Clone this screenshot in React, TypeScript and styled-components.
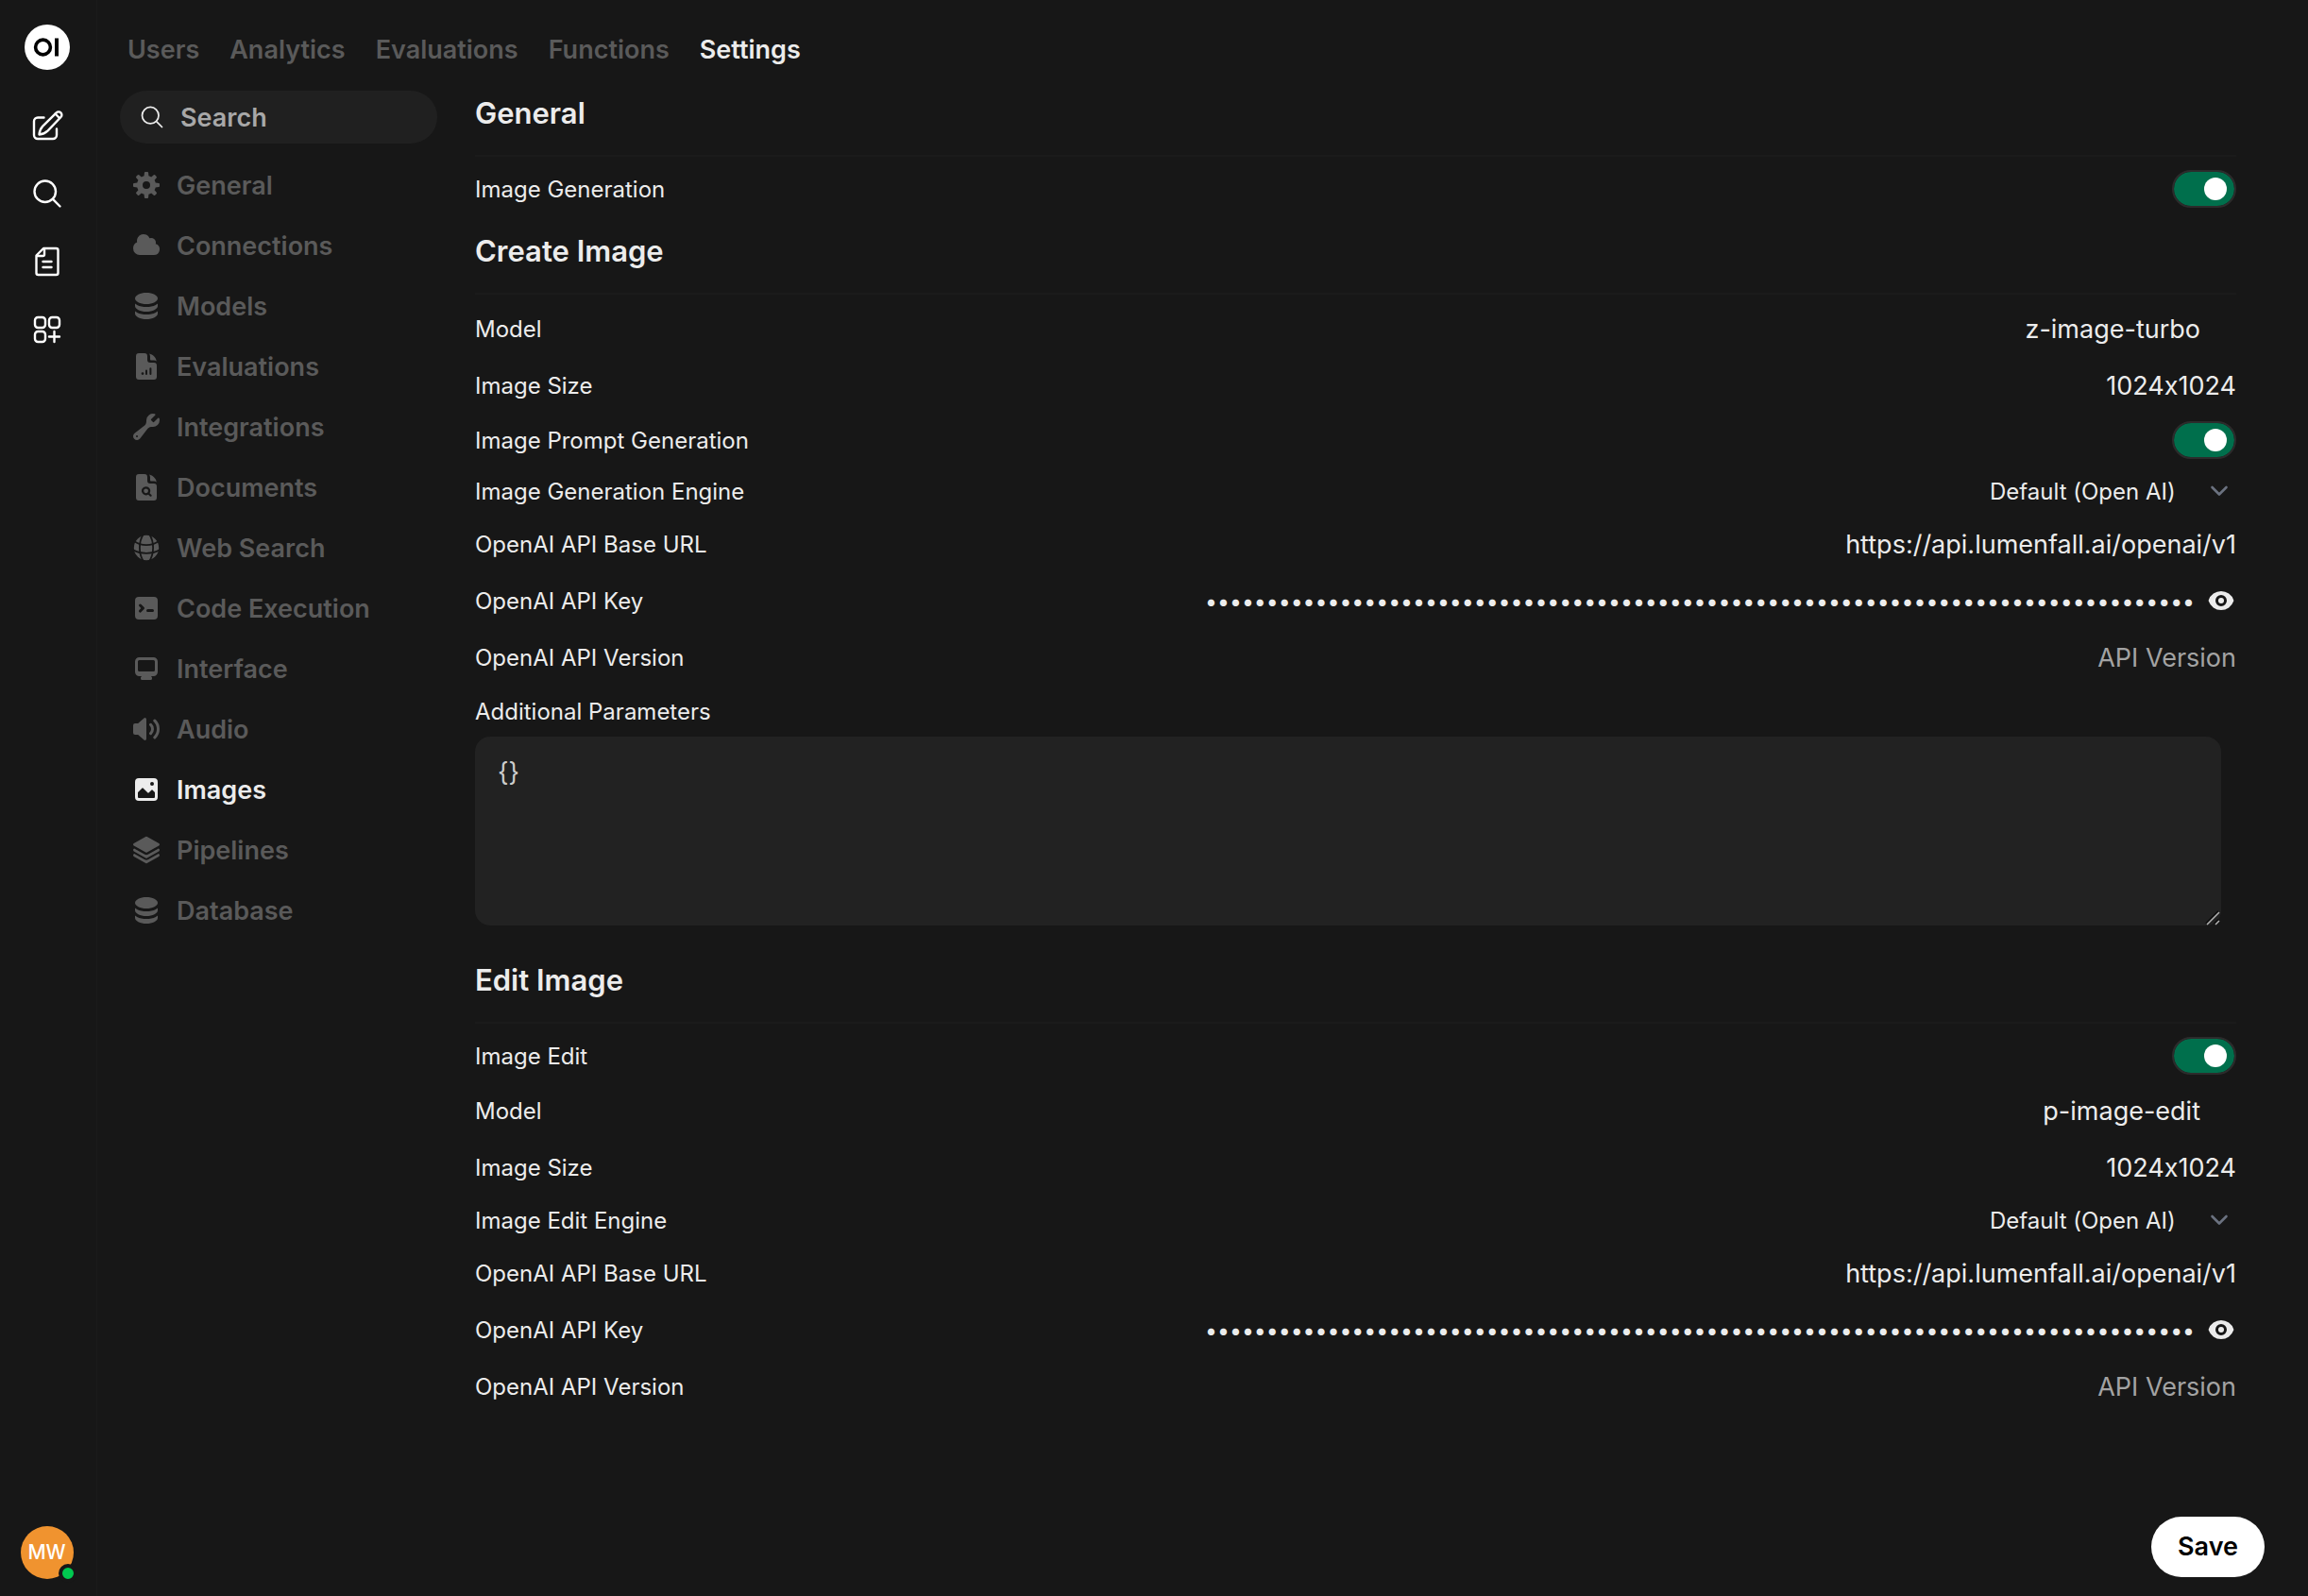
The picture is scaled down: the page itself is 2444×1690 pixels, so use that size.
import React, { useId, useState } from "react";
import styled, { createGlobalStyle } from "styled-components";

const GlobalStyle = createGlobalStyle`
  *, *::before, *::after { box-sizing: border-box; }
  body {
    margin: 0;
    background: #171717;
    color: #ececec;
    font-family: Inter, "Liberation Sans", sans-serif;
    font-size: 27px;
    line-height: 40px;
    font-feature-settings: "calt" 0;
    -webkit-font-smoothing: antialiased;
  }
  button, input, textarea, select { font: inherit; color: inherit; font-feature-settings: inherit; }
`;

const Shell = styled.div`
  display: flex;
  min-height: 100vh;
`;

const Rail = styled.aside`
  display: flex;
  flex-direction: column;
  align-items: center;
  flex: none;
  width: 103px;
  padding: 26px 3px 18px 0;
  border-right: 1px solid #1b1b1b;
`;

const Logo = styled.a`
  display: block;
  height: 48px;
  margin-bottom: 23px;
  svg { display: block; }
`;

const RailLinks = styled.nav`
  display: flex;
  flex-direction: column;
`;

const RailLink = styled.a`
  display: grid;
  place-items: center;
  width: 72px;
  height: 72px;
  color: #ffffff;
`;

const Avatar = styled.button`
  position: relative;
  width: 56px;
  height: 56px;
  margin-top: auto;
  padding: 0;
  border: 0;
  border-radius: 50%;
  background: #f0932f;
  color: #ffffff;
  font-size: 21px;
  font-weight: 500;
  line-height: 56px;
`;

const Presence = styled.span`
  position: absolute;
  right: -4px;
  bottom: -4px;
  width: 20px;
  height: 20px;
  border: 4px solid #171717;
  border-radius: 50%;
  background: #00c950;
`;

const Main = styled.div`
  display: flex;
  flex-direction: column;
  flex: 1;
  min-width: 0;
`;

const Tabs = styled.nav`
  display: flex;
  gap: 32px;
  padding: 33px 32px 23px;
`;

const Tab = styled.a<{ $active?: boolean }>`
  color: ${(p) => (p.$active ? "#ececec" : "#5a5a5a")};
  font-weight: 600;
  text-decoration: none;
`;

const Columns = styled.div`
  display: flex;
  flex: 1;
  gap: 40px;
  padding: 0 46px 20px 24px;
`;

const SideNav = styled.div`
  display: flex;
  flex-direction: column;
  flex: none;
  width: 336px;
`;

const SearchBox = styled.label`
  display: flex;
  align-items: center;
  gap: 16px;
  height: 56px;
  margin-bottom: 16px;
  padding: 0 20px;
  border-radius: 28px;
  background: #202020;
  svg { flex: none; }
`;

const SearchInput = styled.input`
  flex: 1;
  min-width: 0;
  padding: 2px 0 0;
  border: 0;
  outline: 0;
  background: none;
  font-weight: 600;
  &::placeholder { color: #a8a8a8; opacity: 1; }
`;

const NavList = styled.nav`
  display: flex;
  flex-direction: column;
  gap: 8px;
`;

const NavItem = styled.a<{ $active?: boolean }>`
  display: flex;
  align-items: center;
  gap: 16px;
  height: 56px;
  padding: 0 12px;
  color: ${(p) => (p.$active ? "#ececec" : "#5a5a5a")};
  font-weight: 600;
  text-decoration: none;
  svg { flex: none; }
`;

const NavText = styled.span`
  padding-top: 2px;
`;

const Form = styled.form`
  display: flex;
  flex-direction: column;
  flex: 1;
  min-width: 0;
`;

const Section = styled.section`
  display: flex;
  flex-direction: column;
  gap: 20px;
  margin: 0 30px 24px 0;
`;

const SectionTitle = styled.h2`
  margin: -4px 0 -4px;
  padding-bottom: 16px;
  border-bottom: 2px solid #1b1b1b;
  font-size: 31px;
  line-height: 56px;
  font-weight: 600;
`;

const Row = styled.div<{ $h?: number }>`
  display: flex;
  align-items: center;
  height: ${(p) => p.$h ?? 40}px;
`;

const Label = styled.label`
  flex: none;
  margin-right: auto;
  padding-top: 2px;
  font-size: 24px;
  line-height: 32px;
  white-space: nowrap;
`;

const TextInput = styled.input<{ $inset?: boolean }>`
  flex: 1;
  min-width: 0;
  height: 40px;
  padding: 2px ${(p) => (p.$inset ? 38 : 0)}px 0 0;
  border: 0;
  outline: 0;
  background: none;
  text-align: right;
  &::placeholder { color: #a3a3a3; opacity: 1; }
  &[type="password"] { font-size: 23px; }
`;

const EyeButton = styled.button`
  display: grid;
  place-items: center;
  width: 32px;
  height: 40px;
  margin-left: 12px;
  padding: 0;
  border: 0;
  background: none;
`;

const SelectWrap = styled.div`
  display: grid;
  align-items: center;
  > * { grid-area: 1 / 1; }
  svg { justify-self: end; margin-right: 6px; pointer-events: none; }
`;

const Select = styled.select`
  appearance: none;
  height: 34px;
  padding: 2px 64px 0 0;
  border: 0;
  outline: 0;
  background: none;
  font-size: 24px;
  line-height: 32px;
`;

const Switch = styled.input`
  appearance: none;
  display: flex;
  align-items: center;
  width: 64px;
  height: 36px;
  margin: 0 2px;
  padding: 0 8px;
  border-radius: 18px;
  outline: 2px solid #2c2c2c;
  background: #333333;
  &::before {
    content: "";
    width: 24px;
    height: 24px;
    border-radius: 50%;
    background: #ffffff;
  }
  &:checked {
    justify-content: flex-end;
    background: #006f4c;
  }
`;

const ParamsField = styled.div`
  display: flex;
  flex-direction: column;
  gap: 10px;
  margin-bottom: 10px;
  padding-right: 16px;
`;

const ParamsBox = styled.div`
  position: relative;
`;

const Params = styled.textarea`
  display: block;
  width: 100%;
  height: 200px;
  padding: 18px 24px;
  border: 0;
  border-radius: 16px;
  outline: 0;
  background: #222222;
  color: #cdcdcd;
  resize: vertical;
  &::-webkit-resizer { display: none; }
`;

const Grip = styled.svg`
  position: absolute;
  right: 0;
  bottom: 0;
  pointer-events: none;
`;

const Actions = styled.div`
  display: flex;
  justify-content: flex-end;
  margin-top: auto;
`;

const SaveButton = styled.button`
  height: 64px;
  padding: 0 28px;
  border: 0;
  border-radius: 32px;
  background: #ffffff;
  color: #000000;
  font-weight: 600;
`;

/* ---------- icons ---------- */

const Outline = ({ size = 32, width = 1.5, children }: { size?: number; width?: number; children: React.ReactNode }) => (
  <svg width={size} height={size} viewBox="0 0 24 24" fill="none" stroke="currentColor" strokeWidth={width} strokeLinecap="round" strokeLinejoin="round" aria-hidden="true">
    {children}
  </svg>
);

const Solid = ({ children }: { children: React.ReactNode }) => (
  <svg width={32} height={32} viewBox="0 0 16 16" fill="currentColor" fillRule="evenodd" clipRule="evenodd" aria-hidden="true">
    {children}
  </svg>
);

const SearchGlyph = <path d="m21 21-5.197-5.197m0 0A7.5 7.5 0 1 0 5.196 5.196a7.5 7.5 0 0 0 10.607 10.607Z" />;

const LogoMark = () => (
  <svg width="48" height="48" viewBox="0 0 48 48" aria-hidden="true">
    <circle cx="24" cy="24" r="24" fill="#fff" />
    <circle cx="19.5" cy="24" r="7.9" fill="none" stroke="#000" strokeWidth="3.6" />
    <rect x="32" y="14.5" width="4" height="19" fill="#000" />
  </svg>
);

const PencilSquare = () => (
  <svg width="36" height="36" viewBox="0 0 36 36" fill="none" stroke="currentColor" strokeWidth="2.4" strokeLinecap="round" strokeLinejoin="round" aria-hidden="true">
    <path d="M14.500 9.500H8a4 4 0 0 0-4 4V28a4 4 0 0 0 4 4h16a4 4 0 0 0 4-4v-6.500" />
    <path d="M9.500 27.500c.3-3.400 1.500-6.500 4-9.200L27.700 4.300a3.300 3.300 0 0 1 4.700 4.700L18.700 23.300c-2.700 2.600-5.800 3.900-9.200 4.200Z" />
    <path d="m26.500 5.500 4.500 4.500" />
  </svg>
);

const NoteIcon = () => (
  <svg width="36" height="36" viewBox="0 0 36 36" fill="none" stroke="currentColor" strokeWidth="2.400" strokeLinecap="round" strokeLinejoin="round" aria-hidden="true">
    <path d="M14 4h13.500A2 2 0 0 1 29.500 6v24a2 2 0 0 1-2 2h-19a2 2 0 0 1-2-2V11.500L14 4Z" />
    <path d="M15 5v5.500a1.500 1.500 0 0 1-1.500 1.500H8M13.500 18h9M13.500 24h9" />
  </svg>
);

const GridPlus = () => (
  <svg width="36" height="36" viewBox="0 0 36 36" fill="none" stroke="currentColor" strokeWidth="2.400" strokeLinecap="round" aria-hidden="true">
    <rect x="5" y="5" width="11" height="11" rx="3.200" />
    <rect x="20" y="5" width="11" height="11" rx="3.200" />
    <rect x="5" y="20" width="11" height="11" rx="3.200" />
    <path d="M25.500 20v11M20 25.500h11" />
  </svg>
);

const EyeIcon = () => (
  <svg width="32" height="32" viewBox="0 0 16 16" fill="currentColor" fillRule="evenodd" aria-hidden="true">
    <path d="M8 9.500a1.500 1.500 0 1 0 0-3 1.500 1.500 0 0 0 0 3Z" />
    <path d="M1.380 8.280a.870.870 0 0 1 0-.566 7.003 7.003 0 0 1 13.238.006.870.870 0 0 1 0 .566A7.003 7.003 0 0 1 1.379 8.280ZM11 8a3 3 0 1 1-6 0 3 3 0 0 1 6 0Z" />
  </svg>
);

const DatabaseGlyph = (
  <>
    <path d="M8 7c3.314 0 6-1.343 6-3s-2.686-3-6-3-6 1.343-6 3 2.686 3 6 3Z" />
    <path d="M8 8.500c1.840 0 3.579-.370 4.914-1.037A6.330 6.330 0 0 0 14 6.780V8c0 1.657-2.686 3-6 3S2 9.657 2 8V6.780c.346.273.720.500 1.087.683C4.420 8.131 6.160 8.500 8 8.500Z" />
    <path d="M8 12.500c1.840 0 3.579-.370 4.914-1.037.366-.183.740-.410 1.086-.684V12c0 1.657-2.686 3-6 3s-6-1.343-6-3v-1.220c.346.273.720.500 1.087.683C4.420 12.131 6.160 12.500 8 12.500Z" />
  </>
);

const GearGlyph = (
  <path d="M6.955 1.450A.500.500 0 0 1 7.452 1h1.096a.500.500 0 0 1 .497.450l.170 1.699c.484.120.940.312 1.356.562l1.321-1.081a.500.500 0 0 1 .670.033l.774.775a.500.500 0 0 1 .034.670l-1.080 1.320c.250.417.440.873.561 1.357l1.699.170a.500.500 0 0 1 .450.497v1.096a.500.500 0 0 1-.450.497l-1.699.170c-.120.484-.312.940-.562 1.356l1.082 1.322a.500.500 0 0 1-.034.670l-.774.774a.500.500 0 0 1-.670.033l-1.322-1.080c-.416.250-.872.440-1.356.561l-.170 1.699a.500.500 0 0 1-.497.450H7.452a.500.500 0 0 1-.497-.450l-.170-1.699a4.973 4.973 0 0 1-1.356-.562L4.108 13.370a.500.500 0 0 1-.670-.033l-.774-.775a.500.500 0 0 1-.034-.670l1.080-1.320a4.971 4.971 0 0 1-.561-1.357l-1.699-.170A.500.500 0 0 1 1 8.548V7.452a.500.500 0 0 1 .450-.497l1.699-.170c.120-.484.312-.940.562-1.356L2.629 4.107a.500.500 0 0 1 .034-.670l.774-.774a.500.500 0 0 1 .670-.033L5.430 3.710a4.970 4.970 0 0 1 1.356-.561l.170-1.699ZM6 8a2 2 0 1 0 4 0 2 2 0 0 0-4 0Z" />
);

const FoldGlyph = <path d="M9.500 1.300c2 .4 3.500 2 3.900 3.900A2.500 2.500 0 0 0 12 4.800h-1.500a.5.5 0 0 1-.5-.5V2.800c0-.6-.2-1.100-.5-1.500Z" />;

const navItems: { name: string; glyph: React.ReactNode; active?: boolean }[] = [
  { name: "General", glyph: GearGlyph },
  { name: "Connections", glyph: <path d="M1 9.500A3.500 3.500 0 0 0 4.500 13H12a3 3 0 0 0 .917-5.857 2.503 2.503 0 0 0-3.198-3.019 3.500 3.500 0 0 0-6.628 2.171A3.500 3.500 0 0 0 1 9.500Z" /> },
  { name: "Models", glyph: DatabaseGlyph },
  {
    name: "Evaluations",
    glyph: (
      <>
        <path d="M4 1a1.500 1.500 0 0 0-1.500 1.500v11A1.500 1.500 0 0 0 4 15h8a1.500 1.500 0 0 0 1.500-1.500V7.500A1.500 1.500 0 0 0 12 6H10a1.500 1.500 0 0 1-1.500-1.500v-2A1.500 1.500 0 0 0 7 1H4Zm6.200 7.600a.5.5 0 0 1 .5.5V12a.5.5 0 0 1-1 0V9.100a.5.5 0 0 1 .5-.5ZM8 9.800a.5.5 0 0 1 .5.5V12a.5.5 0 0 1-1 0v-1.700a.5.5 0 0 1 .5-.5Zm-2 1.300a.5.500 0 0 1 0 1.400.5.500 0 0 1 0-1.400Z" />
        {FoldGlyph}
      </>
    ),
  },
  { name: "Integrations", glyph: <path d="M15 4.500A3.500 3.500 0 0 1 11.435 8c-.990-.019-2.093.132-2.700.913l-4.130 5.310a2.015 2.015 0 1 1-2.827-2.828l5.309-4.130c.780-.607.932-1.710.914-2.700L8 4.500a3.500 3.500 0 0 1 4.477-3.362c.325.094.390.497.150.736L10.600 3.902a.480.480 0 0 0-.033.653c.271.314.565.608.879.879a.480.480 0 0 0 .653-.033l2.027-2.027c.239-.240.642-.175.736.150.090.310.138.637.138.976ZM3.500 13a.500.500 0 1 1-1 0 .500.500 0 0 1 1 0Z" /> },
  {
    name: "Documents",
    glyph: (
      <>
        <path d="M4 1a1.500 1.500 0 0 0-1.500 1.500v11A1.500 1.500 0 0 0 4 15h8a1.500 1.500 0 0 0 1.500-1.500V7.500A1.500 1.500 0 0 0 12 6H10a1.500 1.500 0 0 1-1.500-1.500v-2A1.500 1.500 0 0 0 7 1H4Zm3.800 6.600a2.300 2.300 0 0 1 1.950 3.500l.9.900a.5.5 0 0 1-.75.750l-.9-.9A2.300 2.300 0 1 1 7.800 7.600Zm0 1.100a1.200 1.200 0 1 0 0 2.400 1.200 1.200 0 0 0 0-2.400Z" />
        {FoldGlyph}
      </>
    ),
  },
  {
    name: "Web Search",
    glyph: (
      <>
        <circle cx="8" cy="8" r="6.600" />
        <g fill="none" stroke="#171717" strokeWidth="0.9">
          <path d="M6.400.9C3.800 4.900 3.800 11.100 6.400 15.100M9.600.9c2.600 4 2.600 10.200 0 14.200" />
          <path d="M1.500 4.500c3.600 2.700 9.400 2.700 13 0M1 9.200c4 2.300 10 2.300 14 0" />
        </g>
      </>
    ),
  },
  {
    name: "Code Execution",
    glyph: <path d="M2 4a2 2 0 0 1 2-2h8a2 2 0 0 1 2 2v8a2 2 0 0 1-2 2H4a2 2 0 0 1-2-2V4Zm2.220 1.970a.750.750 0 0 0 0 1.060l.970.970-.970.970a.750.750 0 1 0 1.060 1.060l1.500-1.500a.750.750 0 0 0 0-1.060l-1.500-1.500a.750.750 0 0 0-1.060 0ZM8.750 8.500a.750.750 0 0 0 0 1.500h2.500a.750.750 0 0 0 0-1.500h-2.500Z" />,
  },
  {
    name: "Interface",
    glyph: <path d="M2 4.250A2.250 2.250 0 0 1 4.250 2h7.500A2.250 2.250 0 0 1 14 4.250v5.500A2.250 2.250 0 0 1 11.750 12h-1.312c.100.128.210.248.328.360a.750.750 0 0 1 .234.545v.345a.750.750 0 0 1-.750.750h-4.500a.750.750 0 0 1-.750-.750v-.345a.750.750 0 0 1 .234-.545c.118-.111.228-.232.328-.360H4.250A2.250 2.250 0 0 1 2 9.750v-5.500Zm2.250-.750a.750.750 0 0 0-.750.750v4.500c0 .414.336.750.750.750h7.500a.750.750 0 0 0 .750-.750v-4.500a.750.750 0 0 0-.750-.750h-7.500Z" />,
  },
  {
    name: "Audio",
    glyph: <path d="M7.557 2.066A.750.750 0 0 1 8 2.750v10.500a.750.750 0 0 1-1.248.560L3.590 11H2a1 1 0 0 1-1-1V6a1 1 0 0 1 1-1h1.590l3.162-2.810a.750.750 0 0 1 .805-.124ZM12.950 3.050a.750.750 0 1 0-1.060 1.060 5.500 5.500 0 0 1 0 7.780.750.750 0 1 0 1.060 1.060 7 7 0 0 0 0-9.900ZM10.828 5.172a.750.750 0 1 0-1.060 1.060 2.500 2.500 0 0 1 0 3.536.750.750 0 1 0 1.060 1.060 4 4 0 0 0 0-5.656Z" />,
  },
  {
    name: "Images",
    active: true,
    glyph: <path d="M2 4a2 2 0 0 1 2-2h8a2 2 0 0 1 2 2v8a2 2 0 0 1-2 2H4a2 2 0 0 1-2-2V4Zm10.500 5.707a.500.500 0 0 0-.146-.353l-1-1a.500.500 0 0 0-.708 0L9.354 9.646a.500.500 0 0 1-.708 0L6.354 7.354a.500.500 0 0 0-.708 0l-2 2a.500.500 0 0 0-.146.353V12a.500.500 0 0 0 .500.500h8a.500.500 0 0 0 .500-.500V9.707ZM12 5a1 1 0 1 1-2 0 1 1 0 0 1 2 0Z" />,
  },
  {
    name: "Pipelines",
    glyph: (
      <>
        <path d="M8.372 1.349a.750.750 0 0 0-.744 0l-6.250 3.500a.750.750 0 0 0 0 1.301l6.250 3.500c.231.132.513.132.744 0l6.250-3.500a.750.750 0 0 0 0-1.301l-6.250-3.500Z" transform="translate(0 -.4)" />
        <path d="m1.570 7.300 5.570 3.130c.534.300 1.186.300 1.720 0L14.430 7.300l.192.108a.750.750 0 0 1 0 1.300l-6.250 3.500a.750.750 0 0 1-.744 0l-6.250-3.500a.750.750 0 0 1 0-1.300L1.570 7.300Z" />
        <path d="m1.570 10.050 5.570 3.130c.534.300 1.186.300 1.720 0l5.570-3.130.192.108a.750.750 0 0 1 0 1.300l-6.250 3.500a.750.750 0 0 1-.744 0l-6.250-3.500a.750.750 0 0 1 0-1.300l.192-.108Z" />
      </>
    ),
  },
  { name: "Database", glyph: DatabaseGlyph },
];

const tabs = ["Users", "Analytics", "Evaluations", "Functions", "Settings"];

/* ---------- fields ---------- */

const ToggleField = ({ label }: { label: string }) => {
  const id = useId();
  const [on, setOn] = useState(true);
  return (
    <Row $h={36}>
      <Label htmlFor={id}>{label}</Label>
      <Switch id={id} type="checkbox" role="switch" checked={on} onChange={() => setOn(!on)} />
    </Row>
  );
};

const TextField = ({ label, value = "", placeholder, inset }: { label: string; value?: string; placeholder?: string; inset?: boolean }) => {
  const id = useId();
  return (
    <Row>
      <Label htmlFor={id}>{label}</Label>
      <TextInput id={id} defaultValue={value} placeholder={placeholder} $inset={inset} />
    </Row>
  );
};

const KeyField = ({ label }: { label: string }) => {
  const id = useId();
  const [shown, setShown] = useState(false);
  return (
    <Row>
      <Label htmlFor={id}>{label}</Label>
      <TextInput id={id} type={shown ? "text" : "password"} defaultValue={"x".repeat(81)} />
      <EyeButton type="button" aria-label="Show key" onClick={() => setShown(!shown)}>
        <EyeIcon />
      </EyeButton>
    </Row>
  );
};

const EngineField = ({ label }: { label: string }) => {
  const id = useId();
  return (
    <Row $h={32}>
      <Label htmlFor={id}>{label}</Label>
      <SelectWrap>
        <Select id={id}>
          <option>Default (Open AI)</option>
        </Select>
        <svg width="24" height="24" viewBox="0 0 24 24" fill="none" stroke="#6b7280" strokeWidth="2.600" strokeLinecap="round" strokeLinejoin="round" aria-hidden="true">
          <path d="m4.500 8 7.500 7.500L19.500 8" />
        </svg>
      </SelectWrap>
    </Row>
  );
};

const ApiFields = () => (
  <>
    <TextField label="OpenAI API Base URL" value="https://api.lumenfall.ai/openai/v1" />
    <KeyField label="OpenAI API Key" />
    <TextField label="OpenAI API Version" placeholder="API Version" />
  </>
);

export default function App() {
  return (
    <>
      <GlobalStyle />
      <Shell>
        <Rail>
          <Logo href="#" aria-label="Home">
            <LogoMark />
          </Logo>
          <RailLinks>
            <RailLink href="#" aria-label="New chat"><PencilSquare /></RailLink>
            <RailLink href="#" aria-label="Search"><Outline size={36} width={1.6}>{SearchGlyph}</Outline></RailLink>
            <RailLink href="#" aria-label="Notes"><NoteIcon /></RailLink>
            <RailLink href="#" aria-label="Workspace"><GridPlus /></RailLink>
          </RailLinks>
          <Avatar type="button">
            MW
            <Presence />
          </Avatar>
        </Rail>
        <Main>
          <Tabs>
            {tabs.map((t) => (
              <Tab key={t} href="#" $active={t === "Settings"}>{t}</Tab>
            ))}
          </Tabs>
          <Columns>
            <SideNav>
              <SearchBox>
                <Outline size={28}>{SearchGlyph}</Outline>
                <SearchInput type="text" placeholder="Search" aria-label="Search settings" />
              </SearchBox>
              <NavList>
                {navItems.map((n) => (
                  <NavItem key={n.name} href="#" $active={n.active}>
                    <Solid>{n.glyph}</Solid>
                    <NavText>{n.name}</NavText>
                  </NavItem>
                ))}
              </NavList>
            </SideNav>
            <Form onSubmit={(e) => e.preventDefault()}>
              <Section>
                <SectionTitle>General</SectionTitle>
                <ToggleField label="Image Generation" />
              </Section>
              <Section>
                <SectionTitle>Create Image</SectionTitle>
                <TextField label="Model" value="z-image-turbo" inset />
                <TextField label="Image Size" value="1024x1024" />
                <ToggleField label="Image Prompt Generation" />
                <EngineField label="Image Generation Engine" />
                <ApiFields />
                <ParamsField>
                  <Label htmlFor="params">Additional Parameters</Label>
                  <ParamsBox>
                    <Params id="params" defaultValue="{}" />
                    <Grip width="18" height="18" viewBox="0 0 18 18" fill="none" aria-hidden="true">
                      <path d="M2 16 15 3M11 16l4-4" stroke="#0d0d0d" strokeWidth="2" />
                      <path d="M3 17 16 4M12 17l4-4" stroke="#b4b4b4" strokeWidth="1.500" />
                    </Grip>
                  </ParamsBox>
                </ParamsField>
              </Section>
              <Section>
                <SectionTitle>Edit Image</SectionTitle>
                <ToggleField label="Image Edit" />
                <TextField label="Model" value="p-image-edit" inset />
                <TextField label="Image Size" value="1024x1024" />
                <EngineField label="Image Edit Engine" />
                <ApiFields />
              </Section>
              <Actions>
                <SaveButton type="submit">Save</SaveButton>
              </Actions>
            </Form>
          </Columns>
        </Main>
      </Shell>
    </>
  );
}
